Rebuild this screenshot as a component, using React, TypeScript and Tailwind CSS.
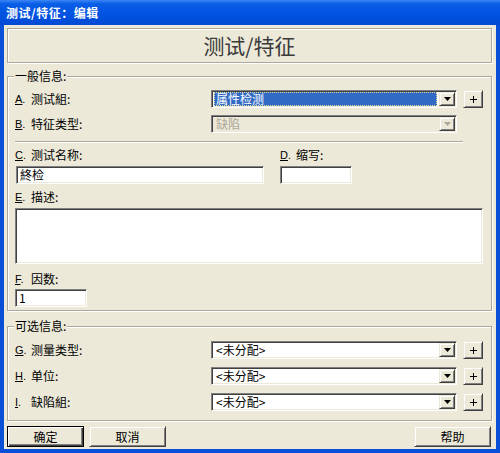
import React from "react";

const font = "font-['Noto_Sans_CJK_SC','Liberation_Sans',sans-serif]";

const Key = ({ k, text }: { k: string; text: string }) => (
    <span className="flex items-center text-[12px] leading-[14px] text-black">
        <span className="w-[16px] font-['Liberation_Sans',sans-serif] text-[11px]">
            <span className="underline">{k}</span>.
        </span>
        <span>{text}</span>
    </span>
);

const Arrow = ({ disabled }: { disabled?: boolean }) => (
    <svg width="7" height="4" viewBox="0 0 7 4">
        <path d="M0 0h7L3.5 4z" fill={disabled ? "#aca899" : "#000"} />
    </svg>
);

const Raised = "border border-t-[#ece9d8] border-l-[#ece9d8] border-b-[#404040] border-r-[#404040] shadow-[inset_1px_1px_0_#fff,inset_-1px_-1px_0_#808080] bg-[#ece9d8]";
const Sunken = "border border-t-[#808080] border-l-[#808080] border-b-white border-r-white shadow-[inset_1px_1px_0_#404040,inset_-1px_-1px_0_#ece9d8]";

const Combo = ({ value, selected, disabled }: { value: string; selected?: boolean; disabled?: boolean }) => (
    <div className={`flex h-[18px] w-[246px] p-[1px] ${Sunken} ${disabled ? "bg-[#ece9d8]" : "bg-white"}`}>
        <div className="flex-1 min-w-0 pr-[2px] pl-[1px]">
            {selected ? (
                <div className="h-full flex items-center whitespace-nowrap bg-[#316ac5] border border-dotted border-[#e8e0a0] text-white text-[12px] leading-[12px] pl-[1px]">
                    {value}
                </div>
            ) : (
                <div className={`h-full flex items-center whitespace-nowrap text-[12px] leading-[12px] pl-[2px] ${disabled ? "text-[#aca899]" : "text-black"}`}>
                    {value}
                </div>
            )}
        </div>
        <div className={`w-[16px] h-full flex items-center justify-center ${Raised}`}>
            <Arrow disabled={disabled} />
        </div>
    </div>
);

const Plus = () => (
    <div className={`ml-[6px] w-[20px] h-[18px] flex items-center justify-center ${Raised}`}>
        <svg width="7" height="7" viewBox="0 0 7 7">
            <path d="M3 0h1v7H3zM0 3h7v1H0z" fill="#000" />
        </svg>
    </div>
);

const ComboRow = ({ k, text, value, selected, disabled, plus = true }: { k: string; text: string; value: string; selected?: boolean; disabled?: boolean; plus?: boolean }) => (
    <div className="flex items-center h-[18px]">
        <div className="w-[196px]">
            <Key k={k} text={text} />
        </div>
        <Combo value={value} selected={selected} disabled={disabled} />
        {plus && <Plus />}
    </div>
);

const Group = ({ title, className, children }: { title: string; className: string; children: React.ReactNode }) => (
    <div className={`relative border border-[#aca899] shadow-[inset_1px_1px_0_#fff,1px_1px_0_#fff] ${className}`}>
        <span className="absolute left-[6px] top-[-8px] px-[1px] bg-[#ece9d8] text-[12px] leading-[14px] text-black">{title}</span>
        {children}
    </div>
);

const Button = ({ label, isDefault, className = "" }: { label: string; isDefault?: boolean; className?: string }) => (
    <div
        className={`w-[77px] h-[21px] flex items-center justify-center text-[12px] text-black bg-[#ece9d8] ${isDefault ? "border border-black shadow-[inset_1px_1px_0_#fff,inset_-1px_-1px_0_#404040,inset_-2px_-2px_0_#808080]" : Raised} ${className}`}
    >
        {label}
    </div>
);

export default function App() {
    return (
        <div className={`w-[500px] h-[453px] flex flex-col bg-[#0a4fd8] ${font}`}>
            <div className="h-[25px] flex items-center px-[6px] bg-[linear-gradient(to_bottom,#3b86f5,#0a5ee6_15%,#0052e0_60%,#0349d4)] text-white text-[12px] font-bold tracking-[0.5px]">
                测试/特征：编辑
            </div>
            <div className="flex-1 mx-[4px] mb-[4px] bg-[#ece9d8] pt-[3px] pl-[3px] pr-[4px] flex flex-col">
                <div className="h-[35px] flex items-center justify-center border border-[#aca899] shadow-[inset_1px_1px_0_#fff,1px_1px_0_#fff] text-[21px] text-[#3a3a3a]">
                    测试/特征
                </div>

                <Group title="一般信息:" className="mt-[13px] h-[235px] pl-[7px] pr-[8px] pt-[13px]">
                    <ComboRow k="A" text="测试組:" value="属性检测" selected />
                    <div className="mt-[7px]">
                        <ComboRow k="B" text="特征类型:" value="缺陷" disabled plus={false} />
                    </div>
                    <div className="mt-[8px] w-[448px] h-[2px] border-t border-[#aca899] border-b border-b-white" />
                    <div className="mt-[5px] flex">
                        <div className="w-[264px]">
                            <Key k="C" text="测试名称:" />
                            <div className={`mt-[4px] ml-[1px] w-[248px] h-[18px] bg-white px-[3px] text-[12px] leading-[15px] ${Sunken}`}>終检</div>
                        </div>
                        <div className="ml-[1px]">
                            <Key k="D" text="缩写:" />
                            <div className={`mt-[4px] w-[72px] h-[18px] bg-white ${Sunken}`} />
                        </div>
                    </div>
                    <div className="mt-[6px]">
                        <Key k="E" text="描述:" />
                    </div>
                    <div className={`mt-[4px] w-[468px] h-[56px] bg-white ${Sunken}`} />
                    <div className="mt-[8px]">
                        <Key k="F" text="因数:" />
                    </div>
                    <div className={`mt-[3px] w-[72px] h-[18px] bg-white px-[3px] text-[12px] leading-[15px] ${Sunken}`}>1</div>
                </Group>

                <Group title="可选信息:" className="mt-[15px] h-[95px] pl-[7px] pr-[8px] pt-[14px] flex flex-col gap-[8px]">
                    <ComboRow k="G" text="测量类型:" value="<未分配>" />
                    <ComboRow k="H" text="单位:" value="<未分配>" />
                    <ComboRow k="I" text="缺陷組:" value="<未分配>" />
                </Group>

                <div className="mt-[5px] flex">
                    <Button label="确定" isDefault />
                    <Button label="取消" className="ml-[5px]" />
                    <Button label="帮助" className="ml-auto mr-[1px]" />
                </div>
            </div>
        </div>
    );
}
